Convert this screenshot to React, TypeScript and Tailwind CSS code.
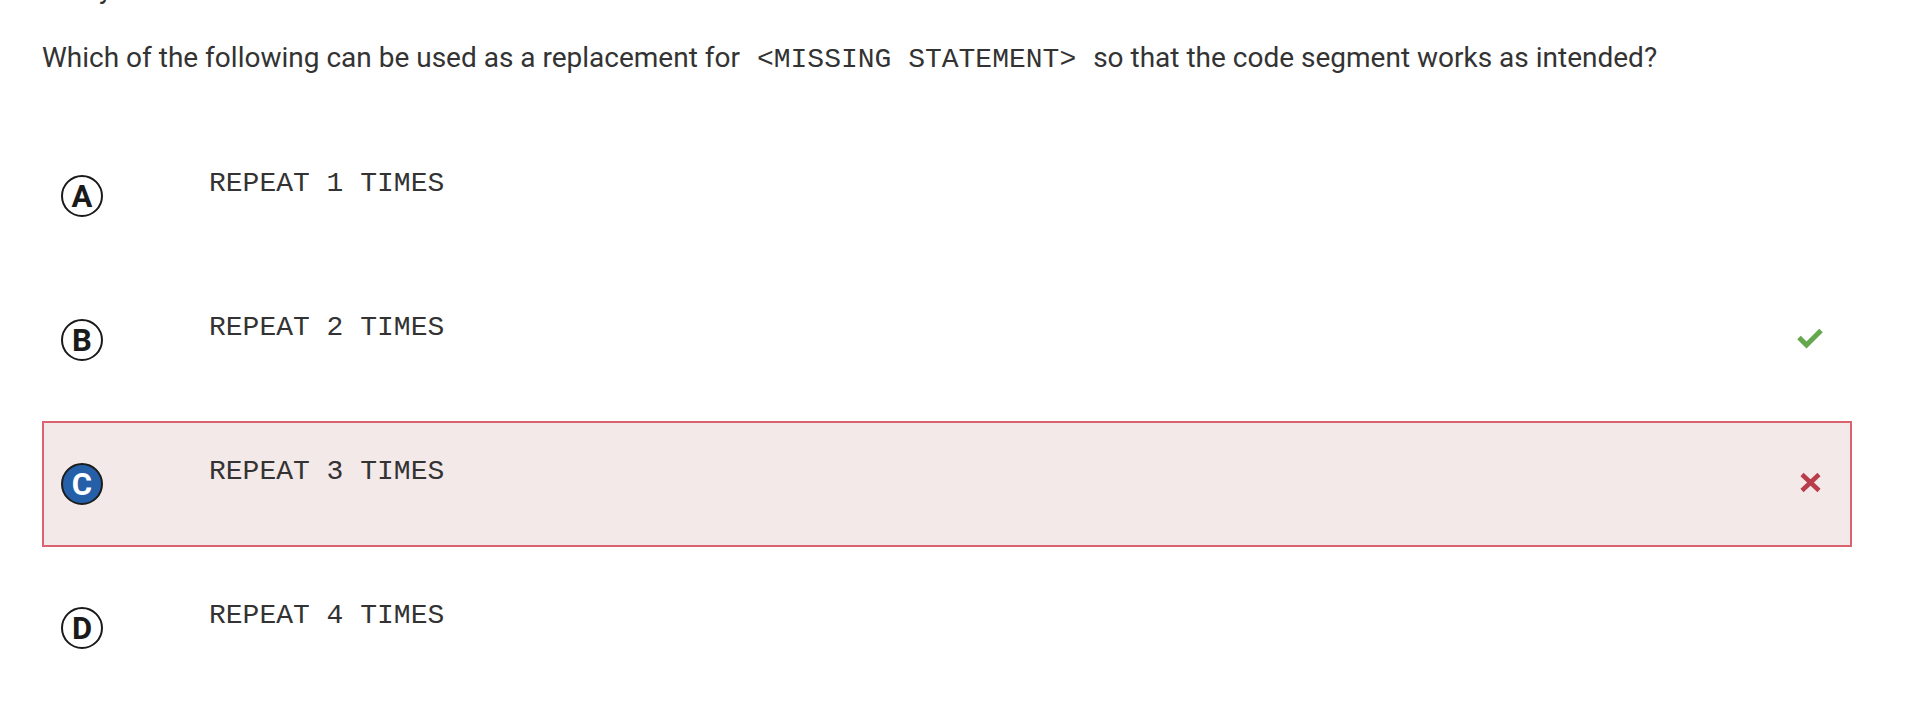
import React from 'react';

type Choice = {
  letter: string;
  code: string;
  status?: 'correct' | 'wrong';
  selected?: boolean;
};

const choices: Choice[] = [
  { letter: 'A', code: 'REPEAT 1 TIMES' },
  { letter: 'B', code: 'REPEAT 2 TIMES', status: 'correct' },
  { letter: 'C', code: 'REPEAT 3 TIMES', status: 'wrong', selected: true },
  { letter: 'D', code: 'REPEAT 4 TIMES' },
];

const mono = "font-['Courier_New','Nimbus_Mono_PS','FreeMono','Liberation_Mono',monospace]";

function CheckMark() {
  return (
    <svg width="26" height="21" viewBox="0 0 26 21" fill="none">
      <path d="M2 9.5 L9.5 17 L24 2.5" stroke="#64a74c" strokeWidth="5" strokeLinejoin="miter" />
    </svg>
  );
}

function CrossMark() {
  return (
    <svg width="23" height="21" viewBox="0 0 23 21" fill="none">
      <path d="M3 2.5 L20 18.5 M20 2.5 L3 18.5" stroke="#b83c49" strokeWidth="4.5" />
    </svg>
  );
}

function ChoiceRow({ choice }: { choice: Choice }) {
  return (
    <div
      className={`flex h-[126px] border-2 pl-[17px] pr-[27px] ${
        choice.selected ? 'border-[#d9646d] bg-[#f3e9e9]' : 'border-transparent'
      }`}
    >
      {/* letter bubble */}
      <div className="flex items-center">
        <div
          className={`flex h-[42px] w-[42px] items-center justify-center rounded-full border-2 font-['Roboto',sans-serif] text-[31px] font-bold leading-none ${
            choice.selected
              ? 'border-[#1c1c1c] bg-[#245fa8] text-white'
              : 'border-[#1a1a1a] bg-white text-[#1a1a1a]'
          }`}
        >
          {choice.letter}
        </div>
      </div>

      <div className={`ml-[106px] flex-1 pt-[32px] text-[28px] leading-[34px] text-[#333] ${mono}`}>
        <span className="whitespace-pre">{choice.code}</span>
      </div>

      <div className="mb-[4px] flex w-[26px] items-center justify-center">
        {choice.status === 'correct' && <CheckMark />}
        {choice.status === 'wrong' && <CrossMark />}
      </div>
    </div>
  );
}

export default function App() {
  return (
    <div className="h-[712px] w-[1910px] overflow-hidden bg-white font-['Roboto',sans-serif] text-[#333]">
      {/* tail of the line scrolled above */}
      <div className="flex h-[5px] items-end overflow-hidden pl-[42px]">
        <p className="shrink-0 text-[28px] leading-[28px] text-[#333] [transform:translateY(-2px)]">Study</p>
      </div>

      <p className="ml-[42px] mt-[33px] text-[28px] leading-[40px] text-[#333]">
        Which of the following can be used as a replacement for{' '}
        <code className={`px-[10px] text-[28px] ${mono}`}>&lt;MISSING STATEMENT&gt;</code>{' '}
        so that the code segment works as intended?
      </p>

      <div className="ml-[42px] mt-[53px] flex w-[1810px] flex-col gap-[18px]">
        {choices.map(c => (
          <ChoiceRow key={c.letter} choice={c} />
        ))}
      </div>
    </div>
  );
}
